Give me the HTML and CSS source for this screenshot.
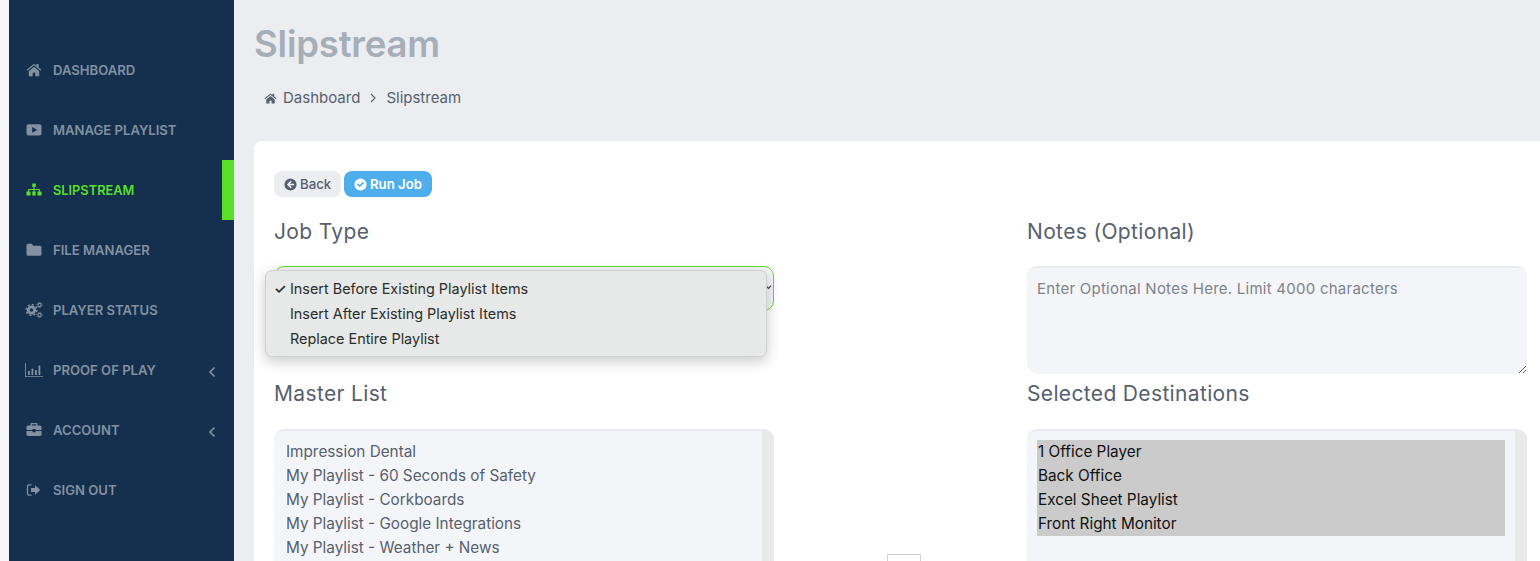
FILE: index.html
```html
<!DOCTYPE html>
<html lang="en">
<head>
<meta charset="utf-8">
<title>Slipstream</title>
<link rel="stylesheet" href="styles.css">
</head>
<body>
<div class="app">
  <aside class="sidebar">
    <nav class="nav">
      <a class="nav-item"><svg class="nav-icon" viewBox="0 0 16 16"><path d="M8 1.700.7 7.800l.8 1L8 3.300l6.500 5.500.8-1-2.700-2.300V2h-2.100v1.700zM2.800 9.200V14.300h3.900v-3.600h2.600v3.600h3.900V9.200L8 4.800z"/></svg><span>DASHBOARD</span></a>
      <a class="nav-item"><svg class="nav-icon" viewBox="0 0 16 16"><path fill-rule="evenodd" d="M2.500 2.200h11a2 2 0 0 1 2 2v7.400a2 2 0 0 1-2 2h-11a2 2 0 0 1-2-2V4.200a2 2 0 0 1 2-2zM6.200 5v5.800l5-2.900z"/></svg><span>MANAGE PLAYLIST</span></a>
      <a class="nav-item active"><svg class="nav-icon" viewBox="0 0 16 16"><path d="M6.300 1.500h3.400v3.400H8.500v2.200h5.300v2.500h1.700v3.900h-4v-3.900h1.300V8.100H8.500v1.500h1.200v3.900H6.300v-3.900h1.200V8.100H3.200v1.500h1.300v3.900h-4v-3.900h1.700V7.100h5.300V4.900H6.300z"/></svg><span>SLIPSTREAM</span></a>
      <a class="nav-item"><svg class="nav-icon" viewBox="0 0 16 16"><path d="M2 1.800h3.800l1.500 1.900H14a1.500 1.500 0 0 1 1.500 1.500v7A1.500 1.500 0 0 1 14 13.700H2A1.500 1.500 0 0 1 .5 12.200V3.300A1.500 1.500 0 0 1 2 1.800z"/></svg><span>FILE MANAGER</span></a>
      <a class="nav-item"><svg class="nav-icon wide" viewBox="0 0 18 16"><circle cx="6.500" cy="8" r="3.200" fill="none" stroke-width="2.800" stroke="currentColor"/><circle cx="6.500" cy="8" r="5.400" fill="none" stroke-width="1.500" stroke="currentColor" stroke-dasharray="2 2.200"/><circle cx="14.500" cy="3" r="1.600" fill="none" stroke-width="1.100" stroke="currentColor"/><circle cx="14.500" cy="3" r="2.700" fill="none" stroke-width=".9" stroke="currentColor" stroke-dasharray="1 1.100"/><circle cx="14.500" cy="13" r="1.600" fill="none" stroke-width="1.100" stroke="currentColor"/><circle cx="14.500" cy="13" r="2.700" fill="none" stroke-width=".9" stroke="currentColor" stroke-dasharray="1 1.100"/></svg><span>PLAYER STATUS</span></a>
      <a class="nav-item"><svg class="nav-icon wide" viewBox="0 0 18 16"><path d="M0 1h.9v13.200H18v.8H0zM3 9h1.800v4H3zM6.500 6.500h1.800V13H6.500zM10 8h1.800v5H10zM13.500 3.500h1.800V13h-1.800z"/></svg><span>PROOF OF PLAY</span><svg class="chev" viewBox="0 0 8 12"><path d="M6.500 1.500 2 6l4.500 4.500" fill="none" stroke="currentColor" stroke-width="1.700"/></svg></a>
      <a class="nav-item"><svg class="nav-icon" viewBox="0 0 16 16"><path d="M5.500 1h5a1 1 0 0 1 1 1v1.500H14A1.500 1.500 0 0 1 15.500 5v3h-6V7h-3v1h-6V5A1.500 1.500 0 0 1 2 3.500h2.500V2a1 1 0 0 1 1-1zM5.800 2.300v1.200h4.400V2.300zM.5 9h6v1.300h3V9h6v3.500A1.500 1.500 0 0 1 14 14H2a1.500 1.500 0 0 1-1.500-1.500z"/></svg><span>ACCOUNT</span><svg class="chev" viewBox="0 0 8 12"><path d="M6.500 1.500 2 6l4.500 4.500" fill="none" stroke="currentColor" stroke-width="1.700"/></svg></a>
      <a class="nav-item"><svg class="nav-icon" viewBox="0 0 16 16"><path d="M5.500 2.800H3A1.500 1.500 0 0 0 1.500 4.300v7.400A1.500 1.500 0 0 0 3 13.200h2.500" fill="none" stroke="currentColor" stroke-width="1.300"/><path d="M9 3.300 14.300 8 9 12.700V10H5V6h4z"/></svg><span>SIGN OUT</span></a>
    </nav>
  </aside>
  <main class="main">
    <header class="page-head">
      <h1 class="page-title">Slipstream</h1>
      <div class="crumbs">
        <svg class="crumb-home" viewBox="0 0 16 16"><path d="M8 1.700.7 7.800l.8 1L8 3.300l6.500 5.500.8-1-2.700-2.300V2h-2.100v1.700zM2.800 9.200V14.300h3.900v-3.600h2.600v3.600h3.900V9.200L8 4.800z"/></svg>
        <span>Dashboard</span>
        <svg class="crumb-sep" viewBox="0 0 8 10"><path d="M2 1l4 4-4 4" fill="none" stroke="currentColor" stroke-width="1.100"/></svg>
        <span>Slipstream</span>
      </div>
    </header>
    <section class="card">
      <div class="actions">
        <button class="btn btn-back"><svg class="btn-icon" viewBox="0 0 16 16"><path fill-rule="evenodd" d="M8 .5a7.500 7.500 0 1 1 0 15A7.500 7.500 0 0 1 8 .5zM8.200 3.300 3.500 8l4.700 4.700 1.400-1.400L7.300 9H12.500V7H7.300l2.300-2.300z"/></svg>Back</button>
        <button class="btn btn-run"><svg class="btn-icon" viewBox="0 0 16 16"><path fill-rule="evenodd" d="M8 .5a7.500 7.500 0 1 1 0 15A7.500 7.500 0 0 1 8 .5zM12.300 6l-1.400-1.400L7 8.500 5.100 6.600 3.700 8 7 11.300z"/></svg>Run Job</button>
      </div>
      <div class="form-grid">
        <div class="field field-top">
          <h2 class="label">Job Type</h2>
          <div class="select-box"><svg class="select-arrow" viewBox="0 0 8 6"><path d="M1 1.500 4 4.500 7 1.500" fill="none" stroke="currentColor" stroke-width="1.400"/></svg></div>
        </div>
        <div class="field field-top">
          <h2 class="label">Notes (Optional)</h2>
          <textarea class="notes" placeholder="Enter Optional Notes Here. Limit 4000 characters"></textarea>
        </div>
        <div class="field">
          <h2 class="label">Master List</h2>
          <div class="listbox">
            <ul class="options">
              <li>Impression Dental</li>
              <li>My Playlist - 60 Seconds of Safety</li>
              <li>My Playlist - Corkboards</li>
              <li>My Playlist - Google Integrations</li>
              <li>My Playlist - Weather + News</li>
            </ul>
            <div class="scroll-track"></div>
          </div>
        </div>
        <div class="field">
          <h2 class="label">Selected Destinations</h2>
          <div class="listbox">
            <ul class="options selected">
              <li>1 Office Player</li>
              <li>Back Office</li>
              <li>Excel Sheet Playlist</li>
              <li>Front Right Monitor</li>
            </ul>
            <div class="scroll-track"></div>
          </div>
        </div>
        <div class="mover"></div>
      </div>
    </section>
  </main>
</div>
<div class="dropdown">
  <div class="dd-item"><span class="dd-check">✓</span>Insert Before Existing Playlist Items</div>
  <div class="dd-item">Insert After Existing Playlist Items</div>
  <div class="dd-item">Replace Entire Playlist</div>
</div>
</body>
</html>
```
FILE: styles.css
```css
* { box-sizing: border-box; }
html, body { margin: 0; height: 561px; overflow: hidden; }
body { font-family: "Inter", "Noto Sans", sans-serif; background: #f5f6fa; color: #56606e; }
.app { display: flex; height: 561px; padding-left: 9px; }
.sidebar { width: 225px; flex: none; background: #14304e; padding-top: 40px; }
.nav { display: flex; flex-direction: column; }
.nav-item { height: 60px; display: flex; align-items: center; padding-left: 17px; color: #8390a1; font-size: 13.100px; font-weight: 600; position: relative; }
.nav-item.active { color: #5adf2b; border-right: 12px solid #5adf2b; font-size: 12.800px; }
.nav-icon { width: 16px; height: 16px; fill: currentColor; margin-right: 11px; flex: none; }
.nav-icon.wide { width: 18px; margin-left: -1px; margin-right: 10px; }
.chev { width: 8px; height: 12px; position: absolute; right: 18px; top: 26px; }
.main { flex: 1; min-width: 0; background: #ecedf1; padding-left: 20px; }
.page-head { height: 141px; padding-top: 22px; }
.page-title { margin: 0; font-size: 36.500px; line-height: 44px; font-weight: 600; color: #a6aeb8; letter-spacing: -.2px; }
.crumbs { display: flex; align-items: center; margin: 21px 0 0 10px; font-size: 15px; line-height: 22px; color: #56606e; }
.crumb-home { width: 13px; height: 13px; fill: currentColor; margin-right: 6px; }
.crumb-sep { width: 8px; height: 10px; margin: 0 9px; }
.card { background: #fff; border-radius: 8px 0 0 0; height: 420px; padding: 30px 0 0 20px; }
.actions { display: flex; gap: 3px; height: 26px; }
.btn { border: 0; border-radius: 8px; height: 26px; font: 500 13.200px "Inter", sans-serif; display: flex; align-items: center; padding: 0 10px; }
.btn-back { background: #ecedf1; color: #56606e; width: 67px; }
.btn-run { background: #4eaeec; color: #fff; font-weight: 600; width: 88px; }
.btn-icon { width: 13px; height: 13px; fill: currentColor; margin-right: 3px; flex: none; }
.form-grid { display: grid; grid-template-columns: 500px 500px; column-gap: 253px; margin-top: 21px; position: relative; }
.field { display: flex; flex-direction: column; }
.field-top { height: 162px; }
.label { margin: 0; font-size: 21px; letter-spacing: .35px; line-height: 28px; font-weight: 400; color: #56606e; height: 48px; }
.select-box { height: 45px; border: 1px solid #5adf2b; border-radius: 10px; background: #f4f5f8; position: relative; }
.select-arrow { position: absolute; right: 1px; top: 17px; width: 7px; height: 6px; color: #444; }
.notes { height: 108px; width: 500px; border: 0; border-top: 2px solid #e9ebf1; border-radius: 10px; background: #f4f5f8; padding: 11px 10px; font: 15px/20px "Inter", sans-serif; letter-spacing: .25px; color: #56606e; resize: both; outline: 0; }
.notes::placeholder { color: #7d838b; opacity: 1; }
.field:not(.field-top) .label { height: 49px; }
.listbox { position: relative; height: 140px; background: #f4f5f8; border-top: 2px solid #e9ebf1; border-radius: 10px 10px 0 0; padding: 9px 22px 0 10px; overflow: hidden; }
.options { list-style: none; margin: 0; padding: 0; font-size: 15.300px; line-height: 24px; color: #56606e; }
.options li { padding-left: 2px; }
.options.selected { background: #cbcbcb; color: #111; width: 468px; }
.options.selected li { padding-left: 1px; }
.scroll-track { position: absolute; right: 0; top: 0; bottom: 0; width: 12px; background: #e9e9e9; }
.mover { position: absolute; left: 613px; top: 336px; width: 34px; height: 30px; border: 1px solid #cfcfcf; background: #fff; }
.dropdown { position: absolute; left: 265px; top: 270px; width: 502px; height: 87px; padding: 5px 0; background: #e6e9e7; border: 1px solid #cfd2d0; border-radius: 7px; box-shadow: 0 4px 14px rgba(0,0,0,.22); }
.dd-item { height: 25px; padding-left: 24px; font: 14.400px/25px "Inter", sans-serif; color: #2b2d2c; position: relative; }
.dd-check { position: absolute; left: 8px; top: 0; font-size: 14px; font-weight: 600; }
```
